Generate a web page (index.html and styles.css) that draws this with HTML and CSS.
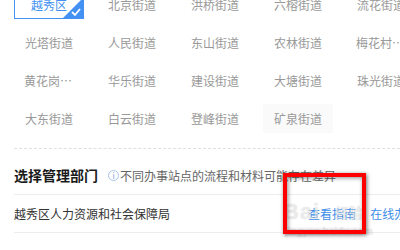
FILE: index.html
```html
<!DOCTYPE html>
<html>
<head>
<meta charset="utf-8">
<link rel="stylesheet" href="styles.css">
</head>
<body>
<div class="page">
  <div class="grid">
    <div class="item selected">越秀区<span class="tick"><svg width="20" height="20" viewBox="0 0 20 20"><polygon points="20,0 20,20 0,20" fill="#4391f2"/><polyline points="9,14 12,17 17,11" fill="none" stroke="#fff" stroke-width="1.8"/></svg></span></div>
    <div class="item">北京街道</div>
    <div class="item">洪桥街道</div>
    <div class="item">六榕街道</div>
    <div class="item">流花街道</div>
    <div class="item">光塔街道</div>
    <div class="item">人民街道</div>
    <div class="item">东山街道</div>
    <div class="item">农林街道</div>
    <div class="item">梅花村街道</div>
    <div class="item">黄花岗街道</div>
    <div class="item">华乐街道</div>
    <div class="item">建设街道</div>
    <div class="item">大塘街道</div>
    <div class="item">珠光街道</div>
    <div class="item">大东街道</div>
    <div class="item">白云街道</div>
    <div class="item">登峰街道</div>
    <div class="item hover">矿泉街道</div>
  </div>
  <div class="dashed"></div>
  <div class="section">
    <span class="title">选择管理部门</span>
    <span class="info">i</span>
    <span class="note">不同办事站点的流程和材料可能存在差异</span>
  </div>
  <div class="row">
    <span class="dept">越秀区人力资源和社会保障局</span>
    <span class="links"><span class="link">查看指南</span><span class="sep">|</span><span class="link">在线办理</span></span>
  </div>
</div>
<div class="watermark">
  <span class="wm-big">Bai</span><span class="wm-jy">经验</span>
  <span class="wm-url">jingyan.baidu.com</span>
</div>
<div class="redbox"></div>
</body>
</html>
```
FILE: styles.css
```css
html, body {
  margin: 0;
  padding: 0;
  background: #fff;
  overflow: hidden;
}
body {
  width: 400px;
  height: 250px;
  position: relative;
  font-family: "Noto Sans CJK SC", "Noto Sans", sans-serif;
}
.page {
  padding-left: 14px;
}
.grid {
  margin-top: -10px;
  display: grid;
  grid-template-columns: repeat(5, 70px);
  grid-auto-rows: 29px;
  column-gap: 13px;
  row-gap: 9px;
}
.item {
  position: relative;
  box-sizing: border-box;
  padding: 0 10px;
  font-size: 12px;
  line-height: 29px;
  color: #999;
  text-align: center;
  white-space: nowrap;
  overflow: hidden;
  text-overflow: ellipsis;
}
.item.selected {
  border: 1px solid #4391f2;
  line-height: 27px;
  color: #4391f2;
}
.item.hover {
  background: #fafafb;
}
.tick {
  position: absolute;
  right: 0;
  bottom: 0;
  width: 20px;
  height: 20px;
  display: block;
}
.tick svg { display: block; }
.dashed {
  margin-top: 15px;
  border-top: 1px dashed #dcdfe4;
}
.section {
  display: flex;
  align-items: center;
  height: 20px;
  padding: 16px 0 9px;
  border-bottom: 1px solid #ececec;
}
.title {
  font-size: 14px;
  font-weight: bold;
  color: #1a1a1a;
  margin-right: 10px;
}
.info {
  box-sizing: border-box;
  width: 11px;
  height: 11px;
  border: 1px solid #a9c5e8;
  border-radius: 50%;
  font-size: 8px;
  line-height: 9px;
  text-align: center;
  color: #7aa3d6;
  margin-right: 1px;
}
.note {
  font-size: 12px;
  color: #666;
}
.row {
  display: flex;
  align-items: center;
  height: 37px;
  border-bottom: 1px solid #ececec;
  white-space: nowrap;
}
.dept {
  flex: none;
  font-size: 12px;
  color: #333;
  width: 294px;
}
.links {
  flex: none;
  font-size: 12px;
  color: #3d8ee9;
  display: flex;
  align-items: center;
}
.sep {
  color: #c7c7c7;
  margin: 0 5px 0 6px;
}
.watermark {
  position: absolute;
  left: 283px;
  top: 190px;
  width: 110px;
  height: 50px;
  color: rgba(255,255,255,0.55);
  text-shadow: 0 0 1px rgba(0,0,0,0.18);
  pointer-events: none;
}
.wm-big {
  position: absolute;
  left: 0;
  top: 10px;
  font-family: "Liberation Sans", sans-serif;
  font-weight: bold;
  font-size: 22px;
  line-height: 24px;
  letter-spacing: 1px;
}
.wm-jy {
  position: absolute;
  left: 52px;
  top: 14px;
  font-size: 14px;
  line-height: 16px;
  font-weight: bold;
}
.wm-url {
  position: absolute;
  left: 2px;
  top: 36px;
  font-family: "Liberation Sans", sans-serif;
  font-weight: bold;
  font-size: 10px;
  line-height: 12px;
}
.redbox {
  position: absolute;
  left: 283px;
  top: 173px;
  width: 75px;
  height: 53px;
  border: 4px solid #ff0000;
  box-shadow: 1px 1px 4px rgba(0,0,0,0.55), inset 1px 1px 4px rgba(0,0,0,0.45);
}
```
